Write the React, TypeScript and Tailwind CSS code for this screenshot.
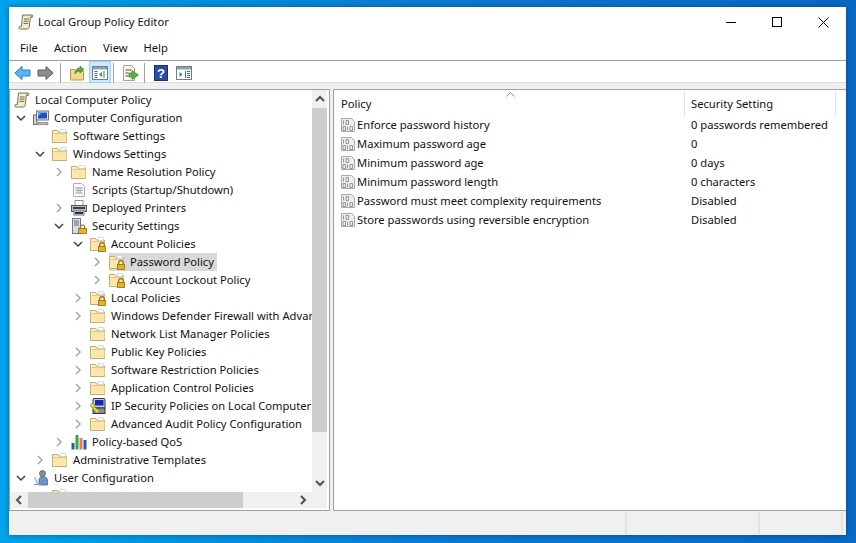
import React from "react";

const Folder = ({ lock = false }: { lock?: boolean }) => (
  <svg width="16" height="16" viewBox="0 0 16 16" className="shrink-0">
    <path d="M0.5 2.5h5l1 1.5h8v10.5h-14z" fill="#fdf0c4" stroke="#c8ab66" />
    <path d="M1.5 6h13v7.5h-13z" fill="#fbe6a8" />
    <path d="M1.5 5.5h13" stroke="#e5c67a" />
    <path d="M8 1.5h5.5v3H8z" fill="#fff" stroke="#b4c9de" strokeWidth="0.6" />
    {lock && (
      <g>
        <path d="M9.7 10.5V9a2.3 2.3 0 0 1 4.6 0v1.5" fill="none" stroke="#8a6d2a" strokeWidth="1.2" />
        <rect x="8.5" y="10.5" width="7" height="5" fill="#e6b422" stroke="#8e6c12" strokeWidth="0.8" />
      </g>
    )}
  </svg>
);

const Scroll = () => (
  <svg width="16" height="16" viewBox="0 0 16 16" className="shrink-0">
    <path d="M4.5 1h9.7c.9 0 1.1 2 0 2.4h-1.8l-1.2 9.8c-.2 1.2-1 1.8-2 1.8H1.8C.6 15 .4 12.6 1.8 12.4h1.6z" fill="#f6ebc8" stroke="#77755f" />
    <path d="M6 5h4.8M5.7 7.2h4.8M5.4 9.4h4.8" stroke="#6f6a58" />
    <path d="M12.5 1.5c1 .4 1 1.6 0 1.9" stroke="#77755f" fill="none" />
  </svg>
);

const Computer = () => (
  <svg width="16" height="16" viewBox="0 0 16 16" className="shrink-0">
    <rect x="0.5" y="5" width="3.5" height="9.5" fill="#c9ccd0" stroke="#6d7278" />
    <rect x="3.5" y="1" width="12" height="9" fill="#e3e6ea" stroke="#6d7278" />
    <rect x="5" y="2.5" width="9" height="6" fill="#1c4fc4" />
    <path d="M5 2.5h4l-4 4z" fill="#5fa4ea" />
    <path d="M5 12.5h10v2H5z" fill="#b9bdc2" stroke="#6d7278" strokeWidth="0.7" />
  </svg>
);

const ScriptDoc = () => (
  <svg width="16" height="16" viewBox="0 0 16 16" className="shrink-0">
    <path d="M2.5 1.5h8l3 3v10h-11z" fill="#fafafa" stroke="#a9adb3" />
    <path d="M4.5 6h7M4.5 8.5h2M9.5 8.5h2M4.5 11h7" stroke="#8d9299" />
    <path d="M6.5 7l1 1.5-1 1.5M9.5 7l-1 1.5 1 1.5" stroke="#6c7178" fill="none" strokeWidth="0.7" />
  </svg>
);

const Printer = () => (
  <svg width="16" height="16" viewBox="0 0 16 16" className="shrink-0">
    <rect x="4" y="0.5" width="8" height="5" fill="#fff" stroke="#8f9297" />
    <rect x="0.5" y="5.5" width="15" height="6" fill="#b8bbc0" stroke="#54575c" />
    <rect x="2" y="7" width="12" height="2" fill="#3d4045" />
    <rect x="3" y="11" width="10" height="4" fill="#eef0f2" stroke="#6d7278" />
    <path d="M4 13h8" stroke="#2c2f33" strokeWidth="2" />
  </svg>
);

const Server = () => (
  <svg width="16" height="16" viewBox="0 0 16 16" className="shrink-0">
    <rect x="1.5" y="0.5" width="8" height="15" fill="#d9dde2" stroke="#6a7a8c" />
    <path d="M3 3h5M3 5h5M3 7h5" stroke="#5a6f88" />
    <rect x="7.5" y="10.5" width="8" height="5" fill="#e6b422" stroke="#8e6c12" strokeWidth="0.8" />
    <path d="M9.3 10.5V9.2a2.2 2.2 0 0 1 4.4 0v1.3" fill="none" stroke="#8a6d2a" strokeWidth="1.2" />
  </svg>
);

const IpSec = () => (
  <svg width="16" height="16" viewBox="0 0 16 16" className="shrink-0">
    <rect x="3" y="0.5" width="12" height="9.5" rx="1" fill="#c8cbd0" stroke="#33363a" />
    <rect x="5" y="2" width="8.5" height="5.5" fill="#1428b8" />
    <rect x="3" y="10" width="12" height="5.5" fill="#8a8d92" stroke="#33363a" />
    <path d="M1 7l7 7" stroke="#efe12a" strokeWidth="2" />
    <circle cx="2.5" cy="7.5" r="2" fill="#efe12a" stroke="#6b6410" strokeWidth="0.5" />
  </svg>
);

const Chart = () => (
  <svg width="16" height="16" viewBox="0 0 16 16" className="shrink-0">
    <rect x="0.5" y="9" width="3" height="6.5" fill="#1f5fb0" />
    <rect x="4.5" y="1" width="3" height="14.5" fill="#36a84a" />
    <rect x="8.5" y="4" width="3" height="11.5" fill="#ef7b52" />
    <rect x="12.5" y="6" width="3" height="9.5" fill="#1f5fb0" />
  </svg>
);

const Users = () => (
  <svg width="16" height="16" viewBox="0 0 16 16" className="shrink-0">
    <circle cx="9.5" cy="3.5" r="3" fill="#8c8f94" stroke="#45484d" strokeWidth="0.7" />
    <path d="M6 15v-5c0-2.5 1.5-3.5 3.5-3.5S14.5 7.5 14.5 10v5z" fill="#6c93c4" stroke="#4c5f7a" strokeWidth="0.7" />
    <path d="M1.5 7l3.5 7" stroke="#a9c7e6" strokeWidth="2" />
    <path d="M1 14.5h7" stroke="#7f9bba" strokeWidth="1.2" />
  </svg>
);

const Binary = () => (
  <svg width="14" height="16" viewBox="0 0 14 16" className="shrink-0">
    <path d="M0.5 1.5h10l3 3v10h-13z" fill="#eceef0" stroke="#a6a9ad" />
    <path d="M2.5 3.5v4M5 3.5h2.5v4H5zM2 9.5h2.5v4H2zM6.5 9.5v4M9 9.5h2.5v4H9z" fill="none" stroke="#7d8186" strokeWidth="0.8" />
  </svg>
);

const Chevron = ({ open }: { open: boolean }) => (
  <svg width="10" height="10" viewBox="0 0 10 10" className="ml-[2px]">
    {open ? (
      <path d="M1 3l4 4 4-4" fill="none" stroke="#404040" strokeWidth="1.5" />
    ) : (
      <path d="M3 1l4 4-4 4" fill="none" stroke="#a6a6a6" strokeWidth="1.5" />
    )}
  </svg>
);

type Row = {
  label: string;
  level: number;
  icon: React.ReactNode;
  arrow?: "open" | "closed";
  selected?: boolean;
};

const indent: Record<number, string> = {
  0: "pl-[4px]",
  1: "pl-[4px]",
  2: "pl-[23px]",
  3: "pl-[42px]",
  4: "pl-[61px]",
  5: "pl-[80px]",
};

const rows: Row[] = [
  { label: "Local Computer Policy", level: 0, icon: <Scroll /> },
  { label: "Computer Configuration", level: 1, icon: <Computer />, arrow: "open" },
  { label: "Software Settings", level: 2, icon: <Folder /> },
  { label: "Windows Settings", level: 2, icon: <Folder />, arrow: "open" },
  { label: "Name Resolution Policy", level: 3, icon: <Folder />, arrow: "closed" },
  { label: "Scripts (Startup/Shutdown)", level: 3, icon: <ScriptDoc /> },
  { label: "Deployed Printers", level: 3, icon: <Printer />, arrow: "closed" },
  { label: "Security Settings", level: 3, icon: <Server />, arrow: "open" },
  { label: "Account Policies", level: 4, icon: <Folder lock />, arrow: "open" },
  { label: "Password Policy", level: 5, icon: <Folder lock />, arrow: "closed", selected: true },
  { label: "Account Lockout Policy", level: 5, icon: <Folder lock />, arrow: "closed" },
  { label: "Local Policies", level: 4, icon: <Folder lock />, arrow: "closed" },
  { label: "Windows Defender Firewall with Advanced Security", level: 4, icon: <Folder />, arrow: "closed" },
  { label: "Network List Manager Policies", level: 4, icon: <Folder /> },
  { label: "Public Key Policies", level: 4, icon: <Folder />, arrow: "closed" },
  { label: "Software Restriction Policies", level: 4, icon: <Folder />, arrow: "closed" },
  { label: "Application Control Policies", level: 4, icon: <Folder />, arrow: "closed" },
  { label: "IP Security Policies on Local Computer", level: 4, icon: <IpSec />, arrow: "closed" },
  { label: "Advanced Audit Policy Configuration", level: 4, icon: <Folder />, arrow: "closed" },
  { label: "Policy-based QoS", level: 3, icon: <Chart />, arrow: "closed" },
  { label: "Administrative Templates", level: 2, icon: <Folder />, arrow: "closed" },
  { label: "User Configuration", level: 1, icon: <Users />, arrow: "open" },
  { label: "Software Settings", level: 2, icon: <Folder /> },
];

const policies: [string, string][] = [
  ["Enforce password history", "0 passwords remembered"],
  ["Maximum password age", "0"],
  ["Minimum password age", "0 days"],
  ["Minimum password length", "0 characters"],
  ["Password must meet complexity requirements", "Disabled"],
  ["Store passwords using reversible encryption", "Disabled"],
];

const Sep = () => <div className="w-px h-[20px] bg-[#a0a0a0] shrink-0" />;

const Arrow = ({ d }: { d: string }) => (
  <svg width="10" height="10" viewBox="0 0 10 10">
    <path d={d} fill="none" stroke="#505050" strokeWidth="2" />
  </svg>
);

export default function App() {
  return (
    <div className="w-[856px] h-[543px] overflow-hidden bg-gradient-to-r from-[#00a4ec] via-[#0a7bd6] to-[#0a68c6] flex pt-[7px] pl-[9px] pr-[10px] pb-[8px] font-['Noto_Sans','Open_Sans',sans-serif] text-[11.2px] text-[#111]">
      <div className="flex-1 flex flex-col bg-white shadow-[0_0_6px_rgba(0,0,0,0.35)] min-w-0">
        {/* Title */}
        <div className="h-[30px] flex items-center shrink-0">
          <div className="ml-[9px] mr-[4px]"><Scroll /></div>
          <span>Local Group Policy Editor</span>
          <div className="ml-auto flex items-center">
            <div className="w-[46px] flex justify-center">
              <div className="w-[10px] h-px bg-black" />
            </div>
            <div className="w-[46px] flex justify-center">
              <div className="w-[10px] h-[10px] border border-black" />
            </div>
            <div className="w-[46px] flex justify-center">
              <svg width="11" height="11" viewBox="0 0 11 11">
                <path d="M0.5 0.5l10 10M10.5 0.5l-10 10" stroke="#000" strokeWidth="1" />
              </svg>
            </div>
          </div>
        </div>
        {/* Menu */}
        <div className="h-[22px] flex items-center pl-[11px] pb-[1px] gap-[16px] shrink-0 border-b border-[#a0a0a0] box-content">
          <span>File</span>
          <span>Action</span>
          <span>View</span>
          <span>Help</span>
        </div>
        {/* Toolbar */}
        <div className="h-[22px] flex items-center shrink-0 pl-[5px] pt-[2px] border-b border-[#dcdcdc]">
          <svg width="17" height="16" viewBox="0 0 17 16" className="shrink-0">
            <path d="M8 1.5L0.8 8 8 14.5V11h8V5H8z" fill="#5cb4ee" stroke="#2a7fc4" />
          </svg>
          <svg width="17" height="16" viewBox="0 0 17 16" className="shrink-0 ml-[6px]">
            <path d="M9 1.5L16.2 8 9 14.5V11H1V5h8z" fill="#8c8c8c" stroke="#5c5c5c" />
          </svg>
          <div className="ml-[6px]"><Sep /></div>
          <svg width="16" height="16" viewBox="0 0 16 16" className="shrink-0 ml-[8px]">
            <path d="M1.5 4.5h4l1 1.5h8v9h-13z" fill="#f5d98c" stroke="#b99a4e" />
            <path d="M6 9c0-4 2-6 5-6V1l4 3.5L11 8V6c-2 0-4 1-5 3z" fill="#4fae3c" stroke="#2f7d26" strokeWidth="0.6" />
          </svg>
          <div className="w-[22px] h-[22px] -mt-[2px] ml-[4px] bg-[#cce8ff] border border-[#99d1ff] flex items-center justify-center shrink-0">
            <svg width="16" height="14" viewBox="0 0 16 14" className="mt-[2px]">
              <rect x="0.5" y="0.5" width="15" height="13" fill="#fff" stroke="#6f7d8a" />
              <rect x="1" y="1" width="14" height="2.5" fill="#8fa0ae" />
              <path d="M2.5 5.5h3M2.5 7.5h3M2.5 9.5h3M2.5 11.5h3M12 5v7" stroke="#3a6ea5" />
              <path d="M10 6l-3 2.5 3 2.5z" fill="#1f9d3a" />
            </svg>
          </div>
          <div className="ml-[2px]"><Sep /></div>
          <svg width="17" height="16" viewBox="0 0 17 16" className="shrink-0 ml-[8px]">
            <path d="M1.5 0.5h8l3 3v12h-11z" fill="#fdf8e8" stroke="#a3a3a3" />
            <path d="M3.5 5h6M3.5 8h3M3.5 11h3" stroke="#505050" />
            <path d="M10 5.5l6.5 4.5-6.5 4.5v-2.5H7V8h3z" fill="#52b348" stroke="#2f7d26" strokeWidth="0.6" />
          </svg>
          <div className="ml-[5px]"><Sep /></div>
          <svg width="14" height="16" viewBox="0 0 14 16" className="shrink-0 ml-[9px]">
            <rect x="0.5" y="0.5" width="13" height="15" fill="#2a4ba6" stroke="#1a2f72" />
            <text x="7" y="13" fontSize="13" fontWeight="700" textAnchor="middle" fill="#fff" fontFamily="Liberation Sans">?</text>
          </svg>
          <svg width="16" height="14" viewBox="0 0 16 14" className="shrink-0 ml-[8px]">
            <rect x="0.5" y="0.5" width="15" height="13" fill="#fff" stroke="#6f7d8a" />
            <rect x="1" y="1" width="14" height="2.5" fill="#8fa0ae" />
            <path d="M11 5.5h3M11 7.5h3M11 9.5h3M11 11.5h3M9.5 5v7" stroke="#3a6ea5" />
            <path d="M3.5 6l3 2.5-3 2.5z" fill="#1f9d3a" />
          </svg>
        </div>
        {/* Panes */}
        <div className="flex-1 flex min-h-0 bg-[#f0f0f0] pt-[6px]">
          <div className="w-[321px] shrink-0 border border-[#a0a0a0] bg-white flex flex-col min-h-0 pr-[2px]">
            <div className="flex-1 flex min-h-0">
              <div className="flex-1 min-w-0 overflow-hidden pt-[1px]">
                {rows.map((r, i) => (
                  <div key={i} className={`h-[18px] flex items-center whitespace-nowrap ${indent[r.level]}`}>
                    {r.level > 0 && (
                      <div className="w-[19px] shrink-0 flex items-center">
                        {r.arrow && <Chevron open={r.arrow === "open"} />}
                      </div>
                    )}
                    <div className={`flex items-center h-[18px] ${r.selected ? "bg-[#d9d9d9] pr-[3px]" : ""}`}>
                      {r.icon}
                      <span className="ml-[5px]">{r.label}</span>
                    </div>
                  </div>
                ))}
              </div>
              <div className="w-[15px] shrink-0 bg-[#f0f0f0] flex flex-col">
                <div className="h-[18px] flex items-center justify-center shrink-0"><Arrow d="M1 7l4-4 4 4" /></div>
                <div className="h-[324px] bg-[#cdcdcd] shrink-0" />
                <div className="mt-auto h-[18px] flex items-center justify-center shrink-0"><Arrow d="M1 3l4 4 4-4" /></div>
              </div>
            </div>
            <div className="h-[16px] shrink-0 bg-[#f0f0f0] flex mb-[2px] items-stretch">
              <div className="w-[18px] flex items-center justify-center shrink-0"><Arrow d="M7 1L3 5l4 4" /></div>
              <div className="w-[215px] bg-[#cdcdcd] shrink-0" />
              <div className="ml-auto w-[18px] mr-[15px] flex items-center justify-center shrink-0"><Arrow d="M3 1l4 4-4 4" /></div>
            </div>
          </div>
          <div className="flex-1 min-w-0 ml-[3px] border-t border-l border-b border-[#a0a0a0] bg-white">
            <div className="h-[24px] mt-[2px] flex items-center relative">
              <div className="w-[351px] pl-[7px] border-r border-[#e5e5e5] h-full flex items-center shrink-0">Policy</div>
              <div className="w-[151px] pl-[6px] border-r border-[#e5e5e5] h-full flex items-center shrink-0">Security Setting</div>
              <svg width="9" height="5" viewBox="0 0 9 5" className="absolute left-[172px] top-0">
                <path d="M0.5 4.5L4.5 0.5l4 4" fill="none" stroke="#8a8a8a" />
              </svg>
            </div>
            <div>
              {policies.map(([p, v]) => (
                <div key={p} className="h-[19px] flex items-center whitespace-nowrap">
                  <div className="w-[351px] shrink-0 flex items-center pl-[7px]">
                    <Binary />
                    <span className="ml-[2px]">{p}</span>
                  </div>
                  <span className="pl-[6px]">{v}</span>
                </div>
              ))}
            </div>
          </div>
        </div>
        {/* Status */}
        <div className="h-[24px] shrink-0 bg-[#f0f0f0] flex justify-end py-[1px] pr-[3px]">
          <div className="w-[133px] border-l-2 border-[#e2e2e2]" />
          <div className="w-[85px] border-l-2 border-r-2 border-[#e2e2e2]" />
        </div>
      </div>
    </div>
  );
}
